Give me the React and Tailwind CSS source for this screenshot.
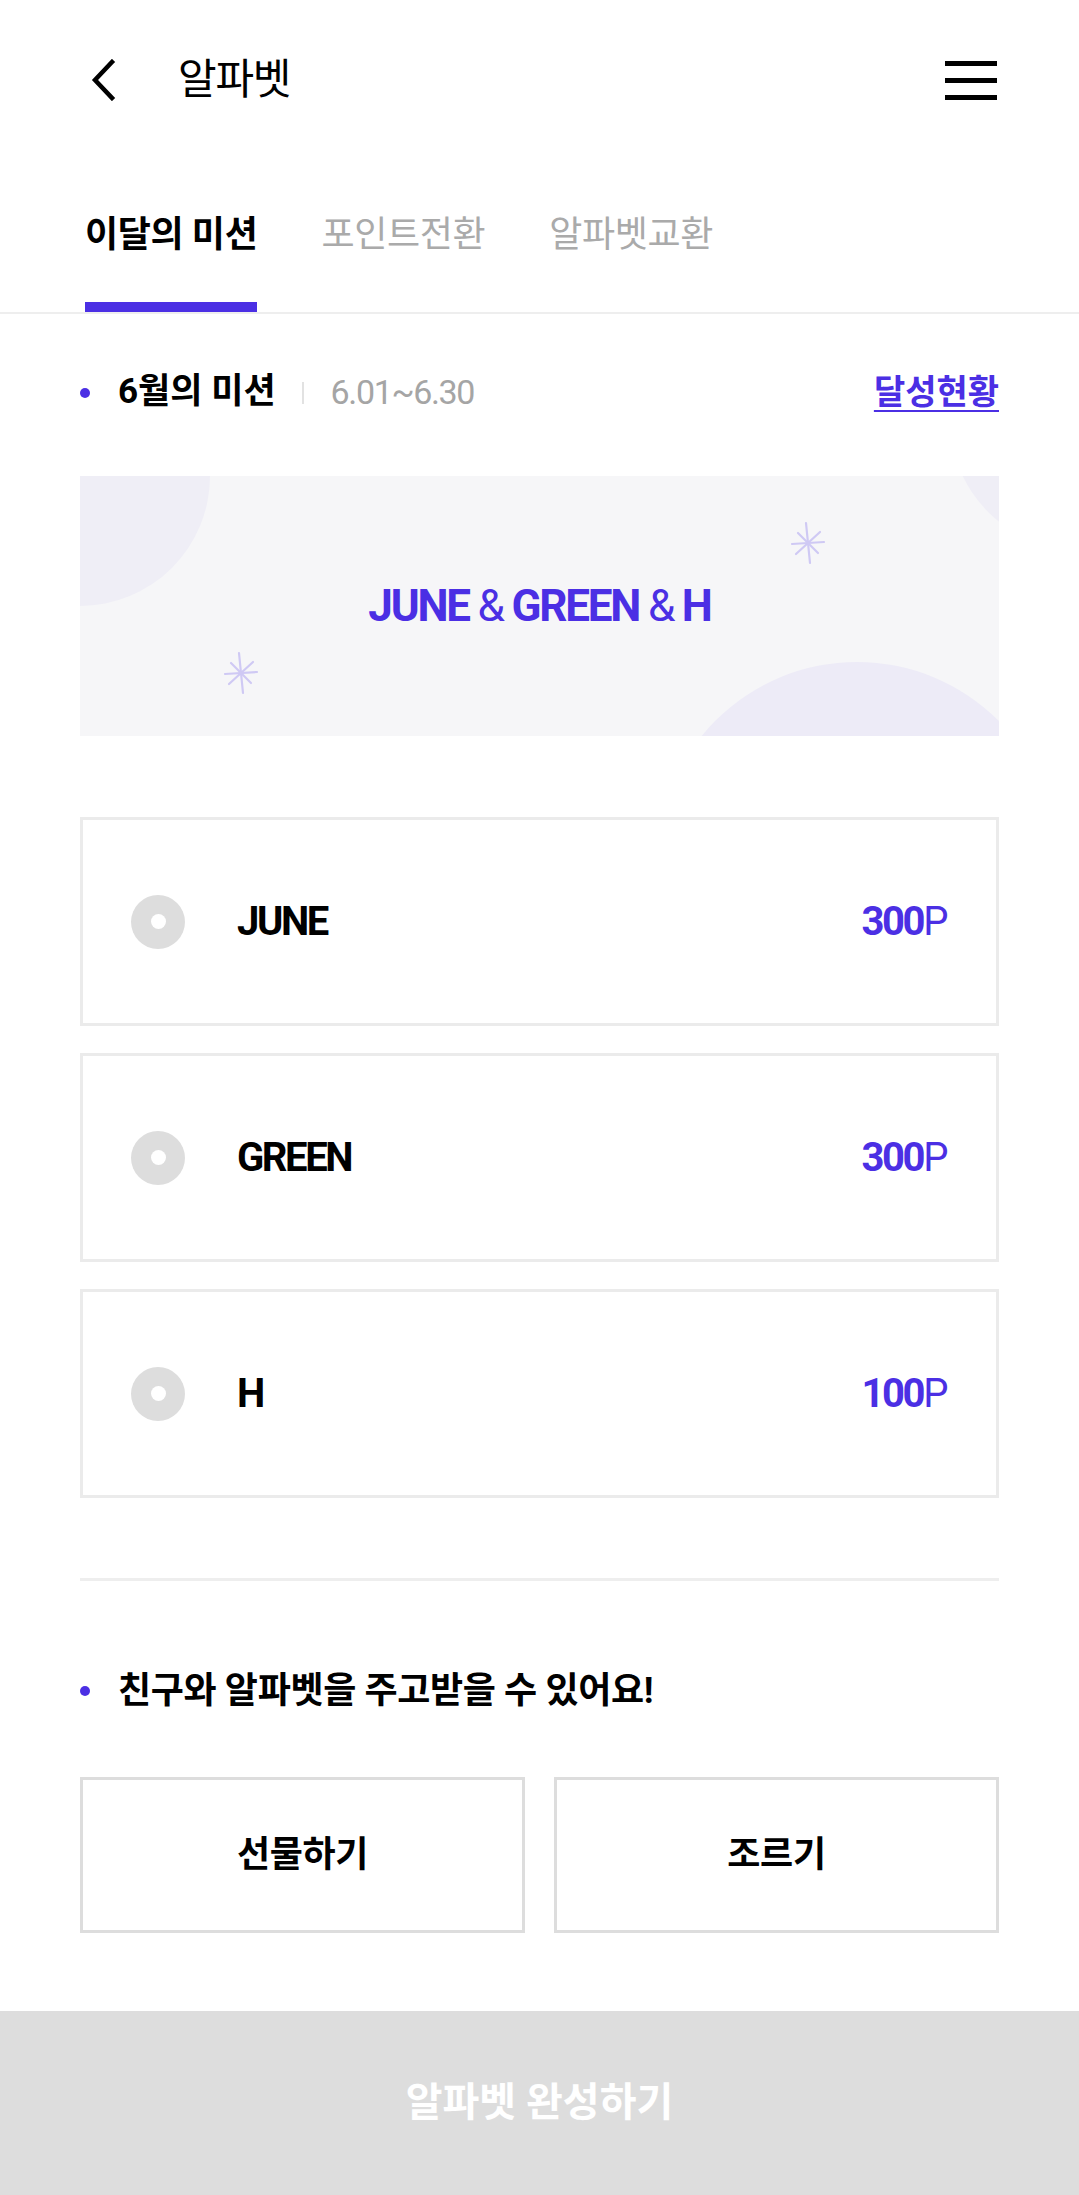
import { useState } from 'react';

const missions = [
    { id: 1, name: 'JUNE', point: 300 },
    { id: 2, name: 'GREEN', point: 300 },
    { id: 3, name: 'H', point: 100 },
];

const tabs = ['이달의 미션', '포인트전환', '알파벳교환'];

const Sparkle = () => (
    <svg width="44" height="44" viewBox="0 0 44 44" fill="none" stroke="#cfc9f4" strokeWidth="2.2" strokeLinecap="round">
        <line x1="20" y1="2" x2="24" y2="42" />
        <line x1="6" y1="23" x2="38" y2="21" />
        <line x1="10" y1="33" x2="34" y2="11" />
        <line x1="12" y1="12" x2="32" y2="32" />
    </svg>
);

const App = () => {
    const [activeTab, setActiveTab] = useState(0);

    return (
        <div className="w-[1079px] min-h-[2195px] bg-white flex flex-col font-['Roboto','Noto_Sans_CJK_KR',sans-serif] text-black">
            {/* Header */}
            <header className="h-[160px] flex items-center pl-[90px] pr-[82px]">
                <svg width="26" height="42" viewBox="0 0 26 42" fill="none" stroke="#000" strokeWidth="4.5" strokeLinecap="square">
                    <polyline points="22,3 5,21 22,39" />
                </svg>
                <h1 className="ml-[62px] text-[42px] leading-none tracking-[-0.03em] font-normal">알파벳</h1>
                <div className="ml-auto w-[52px] flex flex-col gap-[12px]">
                    <span className="h-[5px] bg-black" />
                    <span className="h-[5px] bg-black" />
                    <span className="h-[5px] bg-black" />
                </div>
            </header>

            {/* Tabs */}
            <nav className="flex gap-[64px] px-[85px] pt-[53px] border-b-2 border-[#eeeeee]">
                {tabs.map((tab, idx) => (
                    <button key={tab} onClick={() => setActiveTab(idx)} className="flex flex-col items-stretch">
                        <span className={`text-[36px] leading-[44px] tracking-[-0.01em] ${idx === activeTab ? 'font-bold text-black' : 'text-[#aaaaaa]'}`}>{tab}</span>
                        <span className={`mt-[45px] h-[10px] ${idx === activeTab ? 'bg-[#4b2fe4]' : 'bg-transparent'}`} />
                    </button>
                ))}
            </nav>

            <main className="px-[80px] flex flex-col">
                {/* Section title */}
                <div className="pt-[56px] flex items-center h-[101px]">
                    <span className="w-[10px] h-[10px] rounded-full bg-[#4b2fe4]" />
                    <span className="ml-[28px] text-[35px] font-bold">6월의 미션</span>
                    <span className="ml-[26px] w-[2px] h-[22px] bg-[#e2e2e2]" />
                    <span className="ml-[27px] text-[34px] text-[#a5a5a5] tracking-[-0.04em]">6.01~6.30</span>
                    <a href="#" className="ml-auto text-[34px] font-bold text-[#4b2fe4] underline underline-offset-[6px] decoration-2">달성현황</a>
                </div>

                {/* Banner */}
                <div className="relative mt-[61px] h-[260px] bg-[#f6f6f8] overflow-hidden flex items-center justify-center">
                    <span className="absolute -left-[130px] -top-[130px] w-[260px] h-[260px] rounded-full bg-[#efeef6]" />
                    <span className="absolute left-[870px] -top-[186px] w-[260px] h-[260px] rounded-full bg-[#efeef6]" />
                    <span className="absolute left-[577px] top-[186px] w-[400px] h-[400px] rounded-full bg-[#edebf7]" />
                    <span className="absolute left-[706px] top-[45px]"><Sparkle /></span>
                    <span className="absolute left-[139px] top-[175px]"><Sparkle /></span>
                    <p className="relative text-[44px] leading-none tracking-[-0.05em] text-[#4b2fe4]">
                        <b>JUNE</b> &amp; <b>GREEN</b> &amp; <b>H</b>
                    </p>
                </div>

                {/* Mission list */}
                <ul className="mt-[81px] flex flex-col gap-[27px]">
                    {missions.map((m) => (
                        <li key={m.id} className="h-[209px] border-[3px] border-[#ebebeb] flex items-center pl-[48px] pr-[50px]">
                            <span className="w-[54px] h-[54px] rounded-full bg-[#dddddd] flex items-center justify-center">
                                <span className="w-[15px] h-[15px] rounded-full bg-white" />
                            </span>
                            <span className="ml-[52px] text-[40px] font-bold tracking-[-0.06em]">{m.name}</span>
                            <span className="ml-auto text-[40px] tracking-[-0.06em] text-[#4b2fe4]">
                                <b>{m.point}</b>P
                            </span>
                        </li>
                    ))}
                </ul>

                <hr className="mt-[80px] border-0 h-[3px] bg-[#eeeeee]" />

                {/* Share */}
                <div className="mt-[86px] flex items-center h-[48px]">
                    <span className="w-[10px] h-[10px] rounded-full bg-[#4b2fe4]" />
                    <span className="ml-[28px] text-[36px] font-bold tracking-[-0.01em]">친구와 알파벳을 주고받을 수 있어요!</span>
                </div>

                <div className="mt-[62px] grid grid-cols-2 gap-[29px]">
                    <button className="h-[156px] border-[3px] border-[#dddddd] text-[36px] font-bold tracking-[-0.01em]">선물하기</button>
                    <button className="h-[156px] border-[3px] border-[#dddddd] text-[36px] font-bold tracking-[-0.01em]">조르기</button>
                </div>
            </main>

            {/* Bottom CTA */}
            <button className="mt-[78px] h-[184px] w-full bg-[#dddddd] text-white text-[40px] font-bold">알파벳 완성하기</button>
        </div>
    );
};

export default App;
